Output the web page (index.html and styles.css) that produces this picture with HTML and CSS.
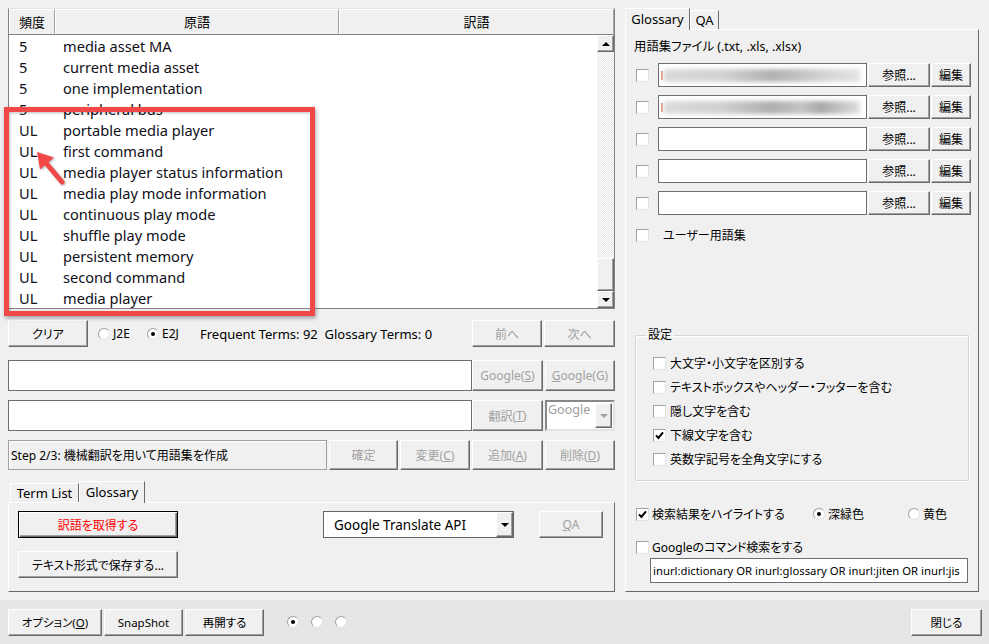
FILE: index.html
```html
<!DOCTYPE html>
<html lang="ja">
<head>
  <meta charset="UTF-8">
  <title>Glossary Maker</title>
  <link rel="stylesheet" href="styles.css">
</head>
<body>
  <div class="main">
    <div class="left">
      <div class="grid">
        <div class="grid-head">
          <div class="hcell c-freq">頻度</div>
          <div class="hcell c-src">原語</div>
          <div class="hcell c-tgt">訳語</div>
        </div>
        <div class="grid-body">
          <div class="rows">
            <div class="row"><span class="freq">5</span><span class="term">media asset MA</span></div>
            <div class="row"><span class="freq">5</span><span class="term">current media asset</span></div>
            <div class="row"><span class="freq">5</span><span class="term">one implementation</span></div>
            <div class="row"><span class="freq">5</span><span class="term">peripheral bus</span></div>
            <div class="row"><span class="freq">UL</span><span class="term">portable media player</span></div>
            <div class="row"><span class="freq">UL</span><span class="term">first command</span></div>
            <div class="row"><span class="freq">UL</span><span class="term">media player status information</span></div>
            <div class="row"><span class="freq">UL</span><span class="term">media play mode information</span></div>
            <div class="row"><span class="freq">UL</span><span class="term">continuous play mode</span></div>
            <div class="row"><span class="freq">UL</span><span class="term">shuffle play mode</span></div>
            <div class="row"><span class="freq">UL</span><span class="term">persistent memory</span></div>
            <div class="row"><span class="freq">UL</span><span class="term">second command</span></div>
            <div class="row"><span class="freq">UL</span><span class="term">media player</span></div>
          </div>
          <div class="vscroll">
            <div class="sb-btn"><span class="tri-up"></span></div>
            <div class="sb-track"><div class="sb-thumb"></div></div>
            <div class="sb-btn"><span class="tri-down"></span></div>
          </div>
        </div>
      </div>

      <div class="ctrl-row">
        <button class="btn btn-clear">クリア</button>
        <div class="opt opt-j2e"><span class="radio"></span>J2E</div>
        <div class="opt opt-e2j"><span class="radio on"></span>E2J</div>
        <div class="counts">Frequent Terms: 92&nbsp;&nbsp;Glossary Terms: 0</div>
        <button class="btn off w70 push">前へ</button>
        <button class="btn off w71">次へ</button>
      </div>

      <div class="field-row">
        <div class="textbox"></div>
        <button class="btn off w71">Google(<u>S</u>)</button>
        <button class="btn off w70"><u>G</u>oogle(G)</button>
      </div>

      <div class="field-row">
        <div class="textbox"></div>
        <button class="btn off w71">翻訳(<u>T</u>)</button>
        <div class="combo combo-off w70">
          <span class="combo-text">Google</span>
          <span class="combo-btn"><span class="tri-down grey"></span></span>
        </div>
      </div>

      <div class="step-row">
        <div class="step-label">Step 2/3: 機械翻訳を用いて用語集を作成</div>
        <button class="btn off w69">確定</button>
        <button class="btn off w70">変更(<u>C</u>)</button>
        <button class="btn off w71">追加(<u>A</u>)</button>
        <button class="btn off w70">削除(<u>D</u>)</button>
      </div>

      <div class="tabs tabs-left">
        <div class="tab tab-term">Term List</div>
        <div class="tab active tab-gloss">Glossary</div>
      </div>
      <div class="tab-panel">
        <div class="tp-row">
          <button class="btn btn-default">訳語を取得する</button>
          <div class="combo combo-api">
            <span class="combo-text">Google Translate API</span>
            <span class="combo-btn"><span class="tri-down"></span></span>
          </div>
          <button class="btn off btn-qa"><u>Q</u>A</button>
        </div>
        <button class="btn btn-save">テキスト形式で保存する...</button>
      </div>
    </div>

    <div class="right">
      <div class="tabs tabs-right">
        <div class="tab active tab-rgloss">Glossary</div>
        <div class="tab tab-qa">QA</div>
      </div>
      <div class="panel">
        <div class="panel-title">用語集ファイル (.txt, .xls, .xlsx)</div>

        <div class="gl-row">
          <span class="chk"></span>
          <div class="textbox gl-input"><span class="mark"></span><span class="blur"></span></div>
          <button class="btn btn-ref">参照...</button>
          <button class="btn btn-edit">編集</button>
        </div>
        <div class="gl-row">
          <span class="chk"></span>
          <div class="textbox gl-input"><span class="mark"></span><span class="blur blur2"></span></div>
          <button class="btn btn-ref">参照...</button>
          <button class="btn btn-edit">編集</button>
        </div>
        <div class="gl-row">
          <span class="chk"></span>
          <div class="textbox gl-input"></div>
          <button class="btn btn-ref">参照...</button>
          <button class="btn btn-edit">編集</button>
        </div>
        <div class="gl-row">
          <span class="chk"></span>
          <div class="textbox gl-input"></div>
          <button class="btn btn-ref">参照...</button>
          <button class="btn btn-edit">編集</button>
        </div>
        <div class="gl-row">
          <span class="chk"></span>
          <div class="textbox gl-input"></div>
          <button class="btn btn-ref">参照...</button>
          <button class="btn btn-edit">編集</button>
        </div>

        <div class="user-row"><span class="chk"></span><span class="user-label">ユーザー用語集</span></div>

        <fieldset class="group">
          <legend>設定</legend>
          <div class="grp-row"><span class="chk"></span>大文字・小文字を区別する</div>
          <div class="grp-row"><span class="chk"></span>テキストボックスやヘッダー・フッターを含む</div>
          <div class="grp-row"><span class="chk"></span>隠し文字を含む</div>
          <div class="grp-row"><span class="chk on"><svg viewBox="0 0 9 9" width="9" height="9"><path d="M1 4.4 L3.4 7 L8 1.4" fill="none" stroke="#000" stroke-width="2"/></svg></span>下線文字を含む</div>
          <div class="grp-row"><span class="chk"></span>英数字記号を全角文字にする</div>
        </fieldset>

        <div class="hl-row">
          <span class="chk on"><svg viewBox="0 0 9 9" width="9" height="9"><path d="M1 4.4 L3.4 7 L8 1.4" fill="none" stroke="#000" stroke-width="2"/></svg></span>
          <span class="hl-label">検索結果をハイライトする</span>
          <div class="opt opt-green"><span class="radio on"></span>深緑色</div>
          <div class="opt"><span class="radio"></span>黄色</div>
        </div>

        <div class="gg-row"><span class="chk"></span><span class="gg-label">Googleのコマンド検索をする</span></div>
        <div class="textbox query">inurl:dictionary OR inurl:glossary OR inurl:jiten OR inurl:jis</div>
      </div>
    </div>
  </div>

  <div class="bottombar">
    <button class="btn btn-opt">オプション(<u>O</u>)</button>
    <button class="btn btn-snap">SnapShot</button>
    <button class="btn btn-resume">再開する</button>
    <div class="radios">
      <span class="radio on"></span>
      <span class="radio"></span>
      <span class="radio"></span>
    </div>
    <button class="btn btn-close">閉じる</button>
  </div>

  <!-- annotation drawn over the screenshot -->
  <div class="callout"></div>
  <svg class="arrow" width="40" height="42" viewBox="0 0 40 42">
    <line x1="16" y1="17" x2="32" y2="36" stroke="#f24848" stroke-width="5" stroke-linecap="round"/>
    <polygon points="7,6 24,11.5 10,23.5" fill="#f24848"/>
  </svg>
</body>
</html>
```

FILE: styles.css
```css
* {
  box-sizing: border-box;
}
body {
  margin: 0;
  width: 989px;
  height: 644px;
  overflow: hidden;
  background: #f0f0f0;
  font-family: "Noto Sans", "Noto Sans CJK JP", sans-serif;
  font-size: 12px;
  font-feature-settings: "palt" 1;
  color: #000;
  position: relative;
}
u {
  text-decoration: underline;
}
.main {
  display: flex;
  gap: 10px;
  padding: 8px 0 0 8px;
  height: 600px;
}
.left {
  width: 607px;
  display: flex;
  flex-direction: column;
}
.right {
  width: 354px;
  display: flex;
  flex-direction: column;
}

/* generic controls */
.btn {
  font-family: inherit;
  font-size: 12px;
  font-feature-settings: "palt" 1;
  color: #000;
  background: #f0f0f0;
  border: 1px solid;
  border-color: #fff #696969 #696969 #fff;
  box-shadow: inset -1px -1px #a0a0a0;
  padding: 0;
  margin: 0;
  height: 100%;
  display: flex;
  align-items: center;
  justify-content: center;
  white-space: nowrap;
}
.btn.off {
  color: #a0a0a0;
}
.w69 { width: 69px; }
.w70 { width: 70px; }
.w71 { width: 71px; }
.push { margin-left: auto; }

.textbox {
  background: #fff;
  border: 1px solid #6e6e6e;
  height: 100%;
}
.chk {
  width: 13px;
  height: 13px;
  flex: none;
  background: #fff;
  border: 1px solid;
  border-color: #a0a0a0 #e3e3e3 #e3e3e3 #a0a0a0;
  display: flex;
  align-items: center;
  justify-content: center;
}
.radio {
  width: 12px;
  height: 12px;
  flex: none;
  border-radius: 50%;
  background: #fff;
  border: 1px solid;
  border-color: #a0a0a0 #e3e3e3 #e3e3e3 #a0a0a0;
  display: flex;
  align-items: center;
  justify-content: center;
}
.radio.on::after {
  content: "";
  width: 4px;
  height: 4px;
  border-radius: 50%;
  background: #000;
}
.opt {
  display: flex;
  align-items: center;
  gap: 3px;
}
.tri-up,
.tri-down {
  width: 0;
  height: 0;
  border-left: 4px solid transparent;
  border-right: 4px solid transparent;
}
.tri-up { border-bottom: 4px solid #000; }
.tri-down { border-top: 4px solid #000; }
.tri-down.grey { border-top-color: #a0a0a0; }

/* term grid */
.grid {
  height: 301px;
  border: 1px solid #828282;
  border-top-color: #e3e3e3;
  display: flex;
  flex-direction: column;
}
.grid-head {
  display: flex;
  height: 26px;
  border-bottom: 1px solid #828282;
}
.hcell {
  display: flex;
  align-items: center;
  justify-content: center;
  font-size: 13px;
  border: 1px solid;
  border-color: #fff #a0a0a0 #f0f0f0 #fff;
}
.c-freq { width: 46px; }
.c-src { width: 284px; }
.c-tgt { flex: 1; }
.grid-body {
  flex: 1;
  display: flex;
  background: #fff;
}
.rows {
  flex: 1;
}
.row {
  height: 21px;
  display: flex;
  align-items: center;
  font-size: 14.6px;
  color: #101018;
}
.freq {
  width: 46px;
  padding-left: 10px;
}
.term {
  padding-left: 8px;
}
.vscroll {
  width: 17px;
  display: flex;
  flex-direction: column;
}
.sb-btn {
  height: 17px;
  background: #f0f0f0;
  border: 1px solid;
  border-color: #fff #696969 #696969 #fff;
  box-shadow: inset -1px -1px #a0a0a0;
  display: flex;
  align-items: center;
  justify-content: center;
}
.sb-track {
  flex: 1;
  display: flex;
  flex-direction: column;
  justify-content: flex-end;
  background: repeating-conic-gradient(#fff 0 25%, #e6e6e6 0 50%) 0 0 / 2px 2px;
}
.sb-thumb {
  height: 33px;
  background: #f0f0f0;
  border: 1px solid;
  border-color: #fff #696969 #696969 #fff;
  box-shadow: inset -1px -1px #a0a0a0;
}

/* rows under the grid */
.ctrl-row {
  display: flex;
  align-items: center;
  height: 27px;
  margin-top: 11px;
}
.btn-clear {
  width: 80px;
}
.opt-j2e {
  width: 49px;
  margin-left: 10px;
}
.opt-e2j {
  width: 53px;
}
.counts {
  white-space: nowrap;
  font-size: 13px;
}
.ctrl-row .w71 {
  margin-left: 2px;
}
.field-row {
  display: flex;
  gap: 2px;
  height: 31px;
  margin-top: 13px;
}
.field-row + .field-row {
  margin-top: 9px;
}
.field-row .textbox {
  flex: 1;
  margin-right: -2px;
}
.combo {
  background: #fff;
  border: 1px solid #646464;
  display: flex;
  height: 100%;
}
.combo-text {
  flex: 1;
  white-space: nowrap;
  overflow: hidden;
}
.combo-btn {
  width: 17px;
  background: #f0f0f0;
  border: 1px solid;
  border-color: #fff #696969 #696969 #fff;
  box-shadow: inset -1px -1px #a0a0a0;
  display: flex;
  align-items: center;
  justify-content: center;
}
.combo-off {
  border-width: 2px;
  border-color: #888 #e3e3e3 #e3e3e3 #888;
}
.combo-off .combo-text {
  color: #a0a0a0;
  font-size: 12.5px;
  padding-left: 1px;
  line-height: 15px;
}
.combo-off .combo-btn {
  margin: 1px 1px 1px 0;
}
.step-row {
  display: flex;
  gap: 2px;
  height: 30px;
  margin-top: 9px;
}
.step-label {
  width: 319px;
  border: 1px solid #a0a0a0;
  box-shadow: inset 1px 1px #fff;
  display: flex;
  align-items: center;
  padding-left: 2px;
  white-space: nowrap;
}

/* tabs */
.tabs {
  display: flex;
  align-items: flex-end;
  height: 21px;
}
.tab {
  height: 19px;
  border: 1px solid;
  border-bottom: none;
  border-color: #fff #696969 #fff #fff;
  display: flex;
  align-items: center;
  justify-content: center;
  font-size: 13px;
  background: #f0f0f0;
  white-space: nowrap;
}
.tab.active {
  height: 22px;
  margin-bottom: -1px;
  padding-bottom: 2px;
  position: relative;
  z-index: 1;
}
.tabs-left {
  margin-top: 11px;
  padding-left: 2px;
}
.tab-term { width: 69px; }
.tab-gloss { width: 66px; }
.tab-rgloss { width: 65px; }
.tab-qa { width: 29px; }
.tab-panel {
  height: 90px;
  border: 1px solid;
  border-color: #fff #696969 #696969 #fff;
  padding: 8px 0 0 9px;
}
.tp-row {
  display: flex;
  align-items: center;
  height: 27px;
}
.btn-default {
  width: 160px;
  color: #f00;
  border: 1px solid #000;
  box-shadow: inset 1px 1px #fff, inset -1px -1px #696969, inset -2px -2px #a0a0a0;
}
.combo-api {
  width: 191px;
  margin-left: 145px;
}
.combo-api .combo-text {
  font-size: 13.5px;
  padding-left: 10px;
  display: flex;
  align-items: center;
}
.btn-qa {
  width: 64px;
  margin-left: 25px;
}
.btn-save {
  width: 160px;
  height: 27px;
  margin-top: 13px;
}

/* right panel */
.panel {
  height: 563px;
  border: 1px solid;
  border-color: #fff #696969 #696969 #fff;
  display: flex;
  flex-direction: column;
}
.panel-title {
  margin: 9px 0 0 8px;
  line-height: 16px;
  font-size: 12.4px;
}
.gl-row {
  display: flex;
  align-items: center;
  height: 24px;
  margin-top: 8px;
}
.gl-row .chk {
  margin-left: 10px;
}
.gl-input {
  width: 209px;
  margin-left: 9px;
  display: flex;
  align-items: center;
  overflow: hidden;
}
.mark {
  width: 2px;
  height: 9px;
  margin-left: 2px;
  background: #e0a080;
}
.blur {
  width: 196px;
  height: 13px;
  margin-left: 1px;
  background: linear-gradient(90deg, #dadada, #d2d2d2 30%, #b2b2b2 55%, #bdbdbd 65%, #d8d8d8 85%, #e4e4e4);
  filter: blur(2px);
}
.blur2 {
  background: linear-gradient(90deg, #dcdcdc, #d0d0d0 30%, #aeaeae 55%, #c4c4c4 70%, #a8a8a8 80%, #e0e0e0);
}
.btn-ref {
  width: 62px;
  margin-left: 1px;
}
.btn-edit {
  width: 40px;
  margin-left: 1px;
}
.user-row {
  display: flex;
  align-items: center;
  height: 16px;
  margin: 12px 0 0 10px;
}
.user-label {
  margin-left: 14px;
}
.group {
  margin: 84px 0 0 9px;
  width: 334px;
  padding: 0 0 9px 10px;
  border: 1px solid #d5d5d5;
  box-shadow: 1px 1px #fff, inset 1px 1px #fff;
}
.group legend {
  padding: 0 2px;
  line-height: 16px;
}
.grp-row {
  display: flex;
  align-items: center;
  gap: 4px;
  height: 24px;
  padding-left: 7px;
  white-space: nowrap;
}
.group legend + .grp-row {
  margin-top: 8px;
}
.hl-row {
  display: flex;
  align-items: center;
  height: 20px;
  margin: 23px 0 0 10px;
}
.hl-label {
  width: 164px;
  padding-left: 3px;
}
.opt-green {
  width: 95px;
}
.gg-row {
  display: flex;
  align-items: center;
  height: 20px;
  margin: 13px 0 0 10px;
}
.gg-label {
  padding-left: 3px;
}
.query {
  height: 25px;
  width: 318px;
  margin: 1px 0 0 24px;
  padding-left: 2px;
  font-size: 11.3px;
  line-height: 23px;
  white-space: nowrap;
  overflow: hidden;
}

/* bottom bar */
.bottombar {
  height: 44px;
  background: #e6e6e6;
  display: flex;
  align-items: center;
  padding: 0 7px 0 8px;
}
.bottombar .btn {
  height: 27px;
  font-size: 11.5px;
}
.btn-opt { width: 94px; }
.btn-snap { width: 79px; margin-left: 2px; }
.btn-resume { width: 79px; margin-left: 2px; }
.radios {
  display: flex;
  gap: 12px;
  margin-left: 23px;
}
.btn-close {
  width: 71px;
  margin-left: auto;
}

/* red annotation */
.callout {
  position: absolute;
  left: 4px;
  top: 107px;
  width: 311px;
  height: 209px;
  border: 5px solid #f24848;
  box-shadow: 1px 2px 4px rgba(0, 0, 0, 0.35), inset 1px 1px 3px rgba(0, 0, 0, 0.25);
}
.arrow {
  position: absolute;
  left: 30px;
  top: 146px;
  filter: drop-shadow(1px 1px 1px rgba(0, 0, 0, 0.3));
}
```
